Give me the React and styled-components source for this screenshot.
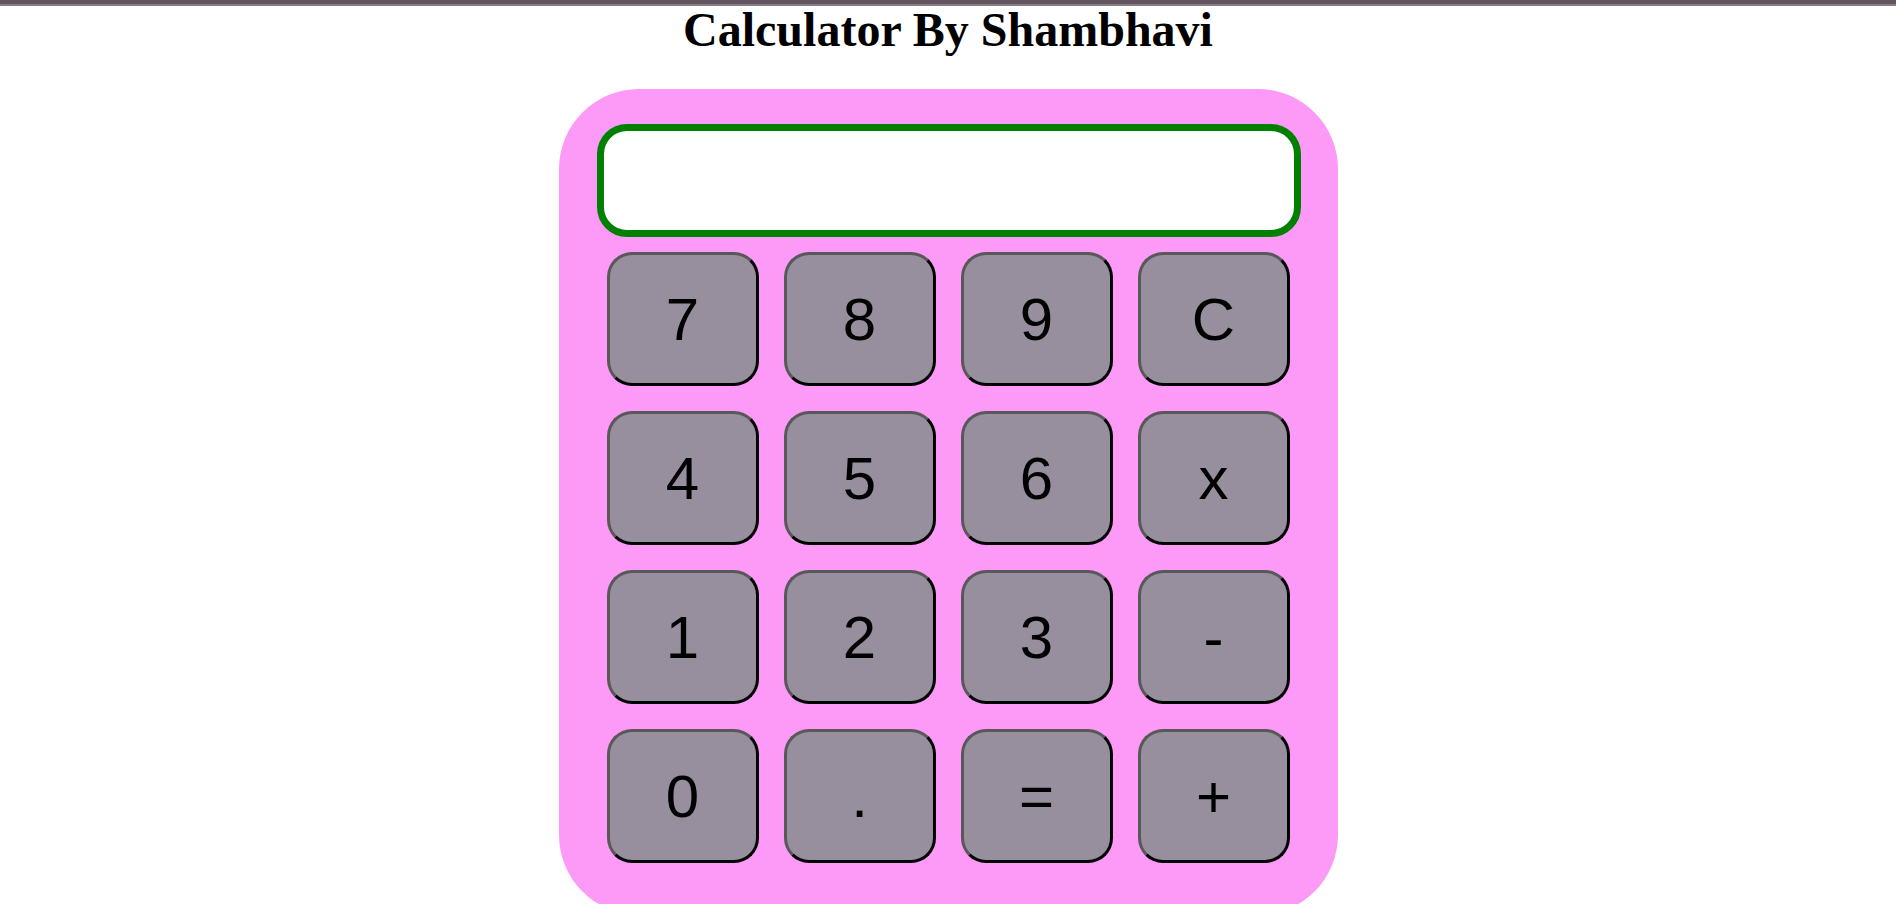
import React, { useState } from 'react'
import styled, { createGlobalStyle } from 'styled-components'

const GlobalStyle = createGlobalStyle`
html, body {
    margin: 0;
    padding: 0;
    overflow: hidden;
    background: #fff;
}
`

const keys = ['7', '8', '9', 'C', '4', '5', '6', 'x', '1', '2', '3', '-', '0', '.', '=', '+']

function App() {
    const [value, setValue] = useState('')

    const press = (k) => {
        if (k === 'C') return setValue('')
        if (k === '=') {
            try {
                // eslint-disable-next-line no-new-func
                const res = Function('return (' + value.replace(/x/g, '*') + ')')()
                setValue(String(res))
            } catch (e) {
                setValue('Error')
            }
            return
        }
        setValue(value + k)
    }

    return (
        <Page>
            <GlobalStyle />
            <TopStrip />
            <Title>Calculator By Shambhavi</Title>
            <Body>
                <Display value={value} readOnly />
                <Keypad>
                    {keys.map(k => (
                        <Key key={k} onClick={() => press(k)}>{k}</Key>
                    ))}
                </Keypad>
            </Body>
        </Page>
    )
}

export default App

const Page = styled.div`
display: flex;
flex-direction: column;
align-items: center;
width: 100%;
`

const TopStrip = styled.div`
align-self: stretch;
height: 4px;
background: #625560;
border-bottom: 2px solid #877d87;
`

const Title = styled.h1`
margin: 0;
font-family: "Liberation Serif", "Times New Roman", serif;
font-size: 48px;
line-height: 48px;
font-weight: bold;
color: #000;
`

const Body = styled.div`
margin-top: 35px;
width: 779px;
box-sizing: border-box;
padding: 35px 37px 52px 38px;
background: #fd99f6;
border-radius: 80px;
`

const Display = styled.input`
display: block;
box-sizing: border-box;
width: 704px;
height: 113px;
border: 7px solid #008000;
border-radius: 30px;
background: #fff;
outline: none;
padding: 0 20px;
font-family: "Liberation Sans", Arial, sans-serif;
font-size: 48px;
text-align: right;
`

const Keypad = styled.div`
display: grid;
grid-template-columns: repeat(4, 152px);
grid-auto-rows: 134px;
gap: 25px;
margin-top: 15px;
padding: 0 10px;
`

const Key = styled.button`
box-sizing: border-box;
width: 152px;
height: 134px;
border-width: 3px;
border-style: solid;
border-color: #585858 #000 #000 #585858;
border-radius: 25px;
background: #978e9e;
color: #000;
font-family: "Liberation Sans", Arial, sans-serif;
font-size: 60px;
padding: 0;
cursor: pointer;
`
